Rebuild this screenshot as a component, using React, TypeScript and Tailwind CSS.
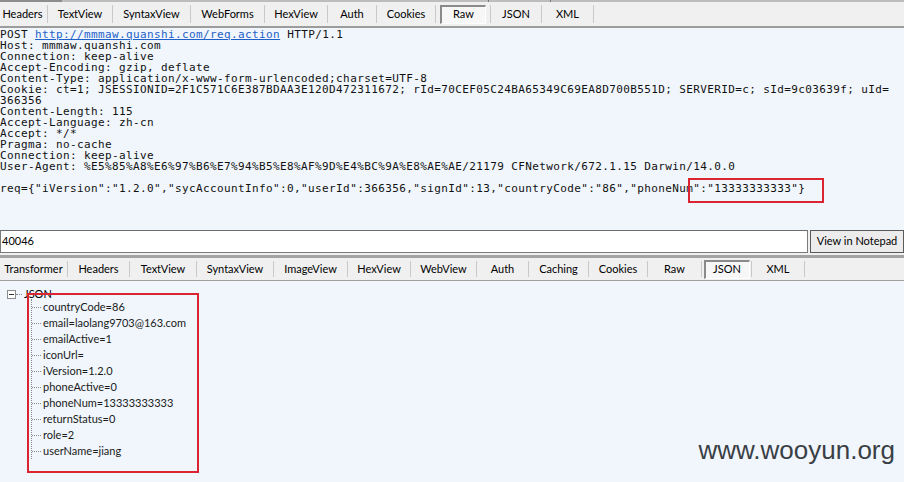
const topTabs = [
  { label: "Headers", w: "w-[50px]", sel: false },
  { label: "TextView", w: "w-[65px]", sel: false },
  { label: "SyntaxView", w: "w-[78px]", sel: false },
  { label: "WebForms", w: "w-[74px]", sel: false },
  { label: "HexView", w: "w-[63px]", sel: false },
  { label: "Auth", w: "w-[49px]", sel: false },
  { label: "Cookies", w: "w-[59px]", sel: false },
  { label: "Raw", w: "w-[55px]", sel: true },
  { label: "JSON", w: "w-[51px]", sel: false },
  { label: "XML", w: "w-[52px]", sel: false },
];

const bottomTabs = [
  { label: "Transformer", w: "w-[68px]", sel: false },
  { label: "Headers", w: "w-[62px]", sel: false },
  { label: "TextView", w: "w-[67px]", sel: false },
  { label: "SyntaxView", w: "w-[77px]", sel: false },
  { label: "ImageView", w: "w-[74px]", sel: false },
  { label: "HexView", w: "w-[63px]", sel: false },
  { label: "WebView", w: "w-[66px]", sel: false },
  { label: "Auth", w: "w-[52px]", sel: false },
  { label: "Caching", w: "w-[60px]", sel: false },
  { label: "Cookies", w: "w-[59px]", sel: false },
  { label: "Raw", w: "w-[54px]", sel: false },
  { label: "JSON", w: "w-[50px]", sel: true },
  { label: "XML", w: "w-[53px]", sel: false },
];

const rawLines = [
  "Host: mmmaw.quanshi.com",
  "Connection: keep-alive",
  "Accept-Encoding: gzip, deflate",
  "Content-Type: application/x-www-form-urlencoded;charset=UTF-8",
  "Cookie: ct=1; JSESSIONID=2F1C571C6E387BDAA3E120D472311672; rId=70CEF05C24BA65349C69EA8D700B551D; SERVERID=c; sId=9c03639f; uId=",
  "366356",
  "Content-Length: 115",
  "Accept-Language: zh-cn",
  "Accept: */*",
  "Pragma: no-cache",
  "Connection: keep-alive",
  "User-Agent: %E5%85%A8%E6%97%B6%E7%94%B5%E8%AF%9D%E4%BC%9A%E8%AE%AE/21179 CFNetwork/672.1.15 Darwin/14.0.0",
  "\u00a0",
  'req={"iVersion":"1.2.0","sycAccountInfo":0,"userId":366356,"signId":13,"countryCode":"86","phoneNum":"13333333333"}',
];

const jsonItems = [
  "countryCode=86",
  "email=laolang9703@163.com",
  "emailActive=1",
  "iconUrl=",
  "iVersion=1.2.0",
  "phoneActive=0",
  "phoneNum=13333333333",
  "returnStatus=0",
  "role=2",
  "userName=jiang",
];

function TabBar({
  tabs,
  cls,
}: {
  tabs: { label: string; w: string; sel: boolean }[];
  cls: string;
}) {
  return (
    <div className={`flex items-stretch bg-[#f0f0f0] ${cls}`}>
      {tabs.map((t) => (
        <div
          key={t.label}
          className={`${t.w} shrink-0 flex items-center justify-center border-r border-[#c9c9c9] my-[3px]`}
        >
          {t.sel ? (
            <div className="flex h-[19px] w-[46px] items-center justify-center border-t-2 border-l-2 border-[#8a8a8a] border-b border-r border-b-white border-r-white bg-[#f7f7f7]">
              {t.label}
            </div>
          ) : (
            t.label
          )}
        </div>
      ))}
    </div>
  );
}

export default function App() {
  return (
    <div className="w-[904px] h-[482px] overflow-hidden bg-[#f0f0f0] text-[11px] text-black [font-family:Lato,'Liberation_Sans',sans-serif]">
      {/* top strip of upper tabs */}
      <div className="flex h-[2px] bg-[#bdbdbd]">
        <div className="w-[62px] bg-[#8d8d8d]" />
        <div className="w-[426px]" />
        <div className="w-[62px] border-l border-[#777]" />
        <div className="w-[70px] border-l border-[#777]" />
      </div>

      <TabBar tabs={topTabs} cls="h-[24px] -ml-[2px]" />

      <div className="h-[2px] bg-[#9c9c9c]" />

      {/* raw request */}
      <div className="relative h-[202px] bg-[#f0f6fc] pt-[1px] [font-family:'DejaVu_Sans_Mono',monospace] text-[11px] tracking-[0.38px] leading-[11px] text-[#111]">
        <div className="whitespace-pre">
          POST{" "}
          <span className="text-[#1f5fc8] underline">
            http://mmmaw.quanshi.com/req.action
          </span>{" "}
          HTTP/1.1
        </div>
        {rawLines.map((l, i) => (
          <div key={i} className="whitespace-pre">
            {l}
          </div>
        ))}
        <div className="absolute left-[688px] top-[150px] h-[25px] w-[136px] border-2 border-[#dc2430]" />
      </div>

      {/* find bar */}
      <div className="flex h-[23px] items-stretch">
        <div className="flex-1 flex items-center border border-[#7a7a7a] border-t-[#6d6d6d] bg-white pl-[1px] text-[11px]">
          40046
        </div>
        <div className="ml-[2px] w-[94px] flex items-center justify-center border border-[#5a5a5a] bg-[#ececec] text-[11px]">
          View in Notepad
        </div>
      </div>

      <div className="h-[2px] bg-[#f0f0f0]" />
      <div className="h-[3px] bg-[#a3a3a3]" />

      <TabBar tabs={bottomTabs} cls="h-[22px]" />

      {/* json tree */}
      <div className="relative h-[202px] border-t border-[#a0a0a0] bg-[#f0f6fc]">
        <div className="flex items-center pt-[7px] pl-[7px]">
          <div className="flex h-[9px] w-[9px] items-center justify-center border border-[#8c8c8c] bg-white">
            <div className="h-[1px] w-[5px] bg-[#333]" />
          </div>
          <div className="w-[6px] border-t border-dotted border-[#888]" />
          <span className="ml-[2px] text-[11px] leading-[12px]">JSON</span>
        </div>
        <div className="ml-[31px] -mt-[1px] border-l border-dotted border-[#8a8a8a] w-fit pr-2">
          {jsonItems.map((it) => (
            <div key={it} className="flex h-[16px] items-center">
              <div className="w-[9px] border-t border-dotted border-[#8a8a8a]" />
              <span className="ml-[2px] text-[11px] text-[#1a1a1a]">{it}</span>
            </div>
          ))}
        </div>
        <div className="absolute left-[27px] top-[12px] h-[180px] w-[172px] border-2 border-[#dc2430]" />
        <div className="absolute right-[9px] bottom-[18px] text-[26px] leading-[28px] text-[#3a3f45] [font-family:'Liberation_Sans',Arial,sans-serif]">
          www.wooyun.org
        </div>
      </div>
    </div>
  );
}
